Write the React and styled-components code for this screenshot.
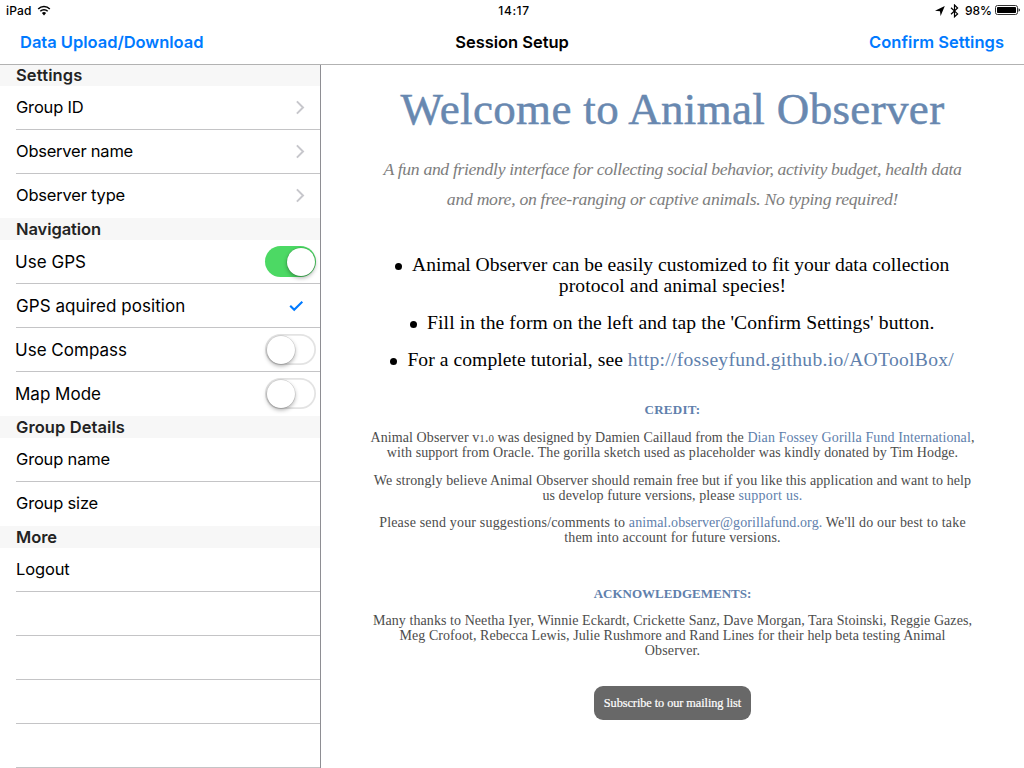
import React from "react";
import styled, { createGlobalStyle } from "styled-components";

const Global = createGlobalStyle`
  * { box-sizing: border-box; }
  body { margin: 0; background: #fff; overflow: hidden; }
`;

const Screen = styled.div`
  width: 1024px;
  height: 768px;
  display: flex;
  flex-direction: column;
  overflow: hidden;
  background: #fff;
  color: #000;
  font-family: Inter, "Liberation Sans", sans-serif;
  font-size: 16.5px;
`;

/* A run of text on one line; $ls is its tracking in px. */
const Text = styled.span`
  display: inline-block;
  white-space: nowrap;
  letter-spacing: ${(p) => p.$ls || 0}px;
`;

/* ---------- top bars ---------- */
const StatusBar = styled.header`
  height: 20px;
  display: grid;
  grid-template-columns: 1fr auto 1fr;
  padding: 0 4px 0 6px;
  font-size: 12px;
  font-weight: 550;
  line-height: 22px;
`;
const StatusGroup = styled.div`
  display: flex;
  align-items: flex-start;
  justify-content: ${(p) => (p.$end ? "flex-end" : "flex-start")};
`;
const StatusIcon = styled.svg`
  flex: none;
  margin: ${(p) => p.$m};
`;
const Clock = styled(Text)`
  padding-left: 2px;
`;

const NavBar = styled.nav`
  height: 45px;
  display: grid;
  grid-template-columns: 1fr auto 1fr;
  padding: 0 20px;
  border-bottom: 1px solid #b2b2b2;
  font-weight: 600;
  line-height: 44px;
`;
const NavLink = styled(Text)`
  color: #007aff;
  justify-self: ${(p) => (p.$end ? "end" : "start")};
`;

/* ---------- sidebar ---------- */
const Body = styled.div`
  flex: 1;
  min-height: 0;
  display: flex;
`;
const Sidebar = styled.aside`
  width: 321px;
  flex: none;
  overflow: hidden;
  border-right: 1px solid #8e8e93;
`;
const SectionHeader = styled.h2`
  margin: 0;
  height: ${(p) => (p.$first ? 21 : 22)}px;
  line-height: ${(p) => (p.$first ? 20 : 22)}px;
  padding-left: 16px;
  background: #f7f7f7;
  color: #232323;
  font-size: 16.5px;
  font-weight: 600;
`;
const RowBox = styled.div`
  height: 44px;
  padding-left: 16px;
`;
const RowInner = styled.div`
  height: 44px;
  display: flex;
  justify-content: space-between;
  align-items: flex-start;
  border-bottom: 1px solid ${(p) => (p.$last ? "transparent" : "#c4c4c6")};
  font-size: ${(p) => (p.$large ? 17 : 16.5)}px;
  line-height: ${(p) => (p.$large ? 45 : 43)}px;
`;
const RowLabel = styled(Text)`
  margin-left: ${(p) => (p.$outdent ? -1 : 0)}px;
`;
const Switch = styled.span`
  width: 51px;
  height: 31px;
  margin: 6px 4px 0 0;
  display: flex;
  align-items: center;
  justify-content: ${(p) => (p.$on ? "flex-end" : "flex-start")};
  padding: 0 1.5px;
  border-radius: 16px;
  background: ${(p) => (p.$on ? "#4cd964" : "#fff")};
  box-shadow: ${(p) => (p.$on ? "none" : "inset 0 0 0 1.75px #e3e3e3")};
`;
const Knob = styled.span`
  width: 28px;
  height: 28px;
  border-radius: 50%;
  background: #fff;
  box-shadow: 0 0 0 0.5px rgba(0, 0, 0, 0.16), 0 2px 4px rgba(0, 0, 0, 0.32);
`;
const RowIcon = styled.svg`
  flex: none;
  margin: ${(p) => p.$m};
`;

const Chevron = () => (
  <RowIcon $m="14px 15px 0 0" width="9" height="15" viewBox="0 0 9 15">
    <path d="M.9 1.4 7 7.5.9 13.6" fill="none" stroke="#c7c7cc" strokeWidth="2" />
  </RowIcon>
);
const Check = () => (
  <RowIcon $m="16px 16px 0 0" width="15" height="12" viewBox="0 0 15 12">
    <path d="M1.2 5.8 5.2 9.8 13.3 1.8" fill="none" stroke="#007aff" strokeWidth="2.1" />
  </RowIcon>
);
const Toggle = ({ on }) => (
  <Switch $on={on}>
    <Knob />
  </Switch>
);

const Row = ({ label, ls, large, outdent, last, children }) => (
  <RowBox>
    <RowInner $large={large} $last={last}>
      <RowLabel $ls={ls} $outdent={outdent}>{label}</RowLabel>
      {children}
    </RowInner>
  </RowBox>
);

/* ---------- main pane ---------- */
const Main = styled.main`
  flex: 1;
  padding-top: 19px;
  text-align: center;
  font-family: "Liberation Serif", "Times New Roman", serif;
`;
const Title = styled.h1`
  margin: 0;
  font-size: 45px;
  font-weight: 400;
  line-height: 50px;
  color: #6888b0;
  -webkit-text-stroke: 0.5px #6888b0;
`;
const Subtitle = styled.div`
  margin-top: 20px;
  font-size: 17.7px;
  font-style: italic;
  line-height: 30px;
  color: #7d7d7d;
`;
const Bullets = styled.ul`
  list-style: none;
  margin: 40px 0 0;
  padding: 0;
  display: flex;
  flex-direction: column;
  gap: 16px;
  font-size: 19.6px;
  line-height: 21px;
`;
const Dot = styled.span`
  display: inline-block;
  width: 7.5px;
  height: 7.5px;
  margin: 0 10px 0 -1px;
  border-radius: 50%;
  background: #000;
  vertical-align: 1px;
`;
const Line = styled.div`
  height: ${(p) => p.$h}px;
`;
const Link = styled.a`
  color: #6080ac;
  letter-spacing: ${(p) => (p.$ls ? `${p.$ls}px` : "inherit")};
`;
const Heading = styled.h3`
  margin: ${(p) => p.$top}px 0 0;
  font-size: 13px;
  font-weight: 700;
  line-height: 15px;
  height: 15px;
  color: #6080ac;
`;
const Paragraph = styled.div`
  margin-top: ${(p) => p.$top || 13}px;
  font-size: 14px;
  line-height: 15px;
  color: #4c4c4c;
`;
const OldStyle = styled.span`
  font-size: 0.78em;
`;
const Subscribe = styled.button`
  margin: 28px 0 0;
  width: 157px;
  height: 34px;
  padding: 0;
  border: 0;
  border-radius: 9px;
  background: #686868;
  color: #fff;
  font-family: inherit;
  font-size: 12.3px;
  line-height: 34px;
  vertical-align: top;
  -webkit-text-stroke: 0.2px #fff;
`;

const T = ({ ls, children }) => (
  <Line $h={15}>
    <Text $ls={ls}>{children}</Text>
  </Line>
);

export default function App() {
  return (
    <Screen>
      <Global />
      <StatusBar>
        <StatusGroup>
          <Text $ls={0.15}>iPad</Text>
          <StatusIcon $m="5px 0 0 5px" width="14" height="11" viewBox="0 0 14 11">
            <path d="M1.2 4A8.2 8.2 0 0 1 12.8 4M3.3 6.2A5.2 5.2 0 0 1 10.7 6.2" fill="none" stroke="#000" strokeWidth="1.5" />
            <path d="M7 10.4 4.9 8.1A3 3 0 0 1 9.1 8.1Z" />
          </StatusIcon>
        </StatusGroup>
        <Clock $ls={0.6}>14:17</Clock>
        <StatusGroup $end>
          <StatusIcon $m="6px 5px 0 0" width="10" height="10" viewBox="0 0 10 10">
            <path d="M9.8.1 5.6 10 5 5.3 0 4.8Z" />
          </StatusIcon>
          <StatusIcon $m="4px 6px 0 0" width="9" height="14" viewBox="0 0 9 14">
            <path d="M1 3.7 7.6 9.9 4.5 12.8V1L7.6 4 1 10.2" fill="none" stroke="#000" strokeWidth="1.2" />
          </StatusIcon>
          <Text $ls={-0.05}>98%</Text>
          <StatusIcon $m="5px 0 0 3px" width="25" height="10" viewBox="0 0 25 10">
            <rect x=".5" y=".5" width="22" height="9" rx="2" fill="none" stroke="#333" />
            <rect x="2" y="2" width="19" height="6" rx=".8" />
            <path d="M23.6 3.2Q24.9 3.8 24.9 5T23.6 6.8Z" />
          </StatusIcon>
        </StatusGroup>
      </StatusBar>

      <NavBar>
        <NavLink $ls={-0.02}>Data Upload/Download</NavLink>
        <Text $ls={-0.03}>Session Setup</Text>
        <NavLink $ls={0.04} $end>Confirm Settings</NavLink>
      </NavBar>

      <Body>
        <Sidebar>
          <SectionHeader $first><Text $ls={0.135}>Settings</Text></SectionHeader>
          <Row label="Group ID" ls={-0.186}><Chevron /></Row>
          <Row label="Observer name" ls={-0.233}><Chevron /></Row>
          <Row label="Observer type" ls={-0.206} last><Chevron /></Row>
          <SectionHeader><Text $ls={-0.081}>Navigation</Text></SectionHeader>
          <Row label="Use GPS" ls={0.033} large outdent><Toggle on /></Row>
          <Row label="GPS aquired position" ls={0.06} large><Check /></Row>
          <Row label="Use Compass" ls={0.01} large outdent><Toggle /></Row>
          <Row label="Map Mode" ls={0.004} large outdent last><Toggle /></Row>
          <SectionHeader><Text $ls={0.084}>Group Details</Text></SectionHeader>
          <Row label="Group name" ls={-0.173} />
          <Row label="Group size" ls={-0.184} last />
          <SectionHeader><Text $ls={-0.055}>More</Text></SectionHeader>
          <Row label="Logout" ls={-0.148} />
          <Row />
          <Row />
          <Row />
          <Row />
        </Sidebar>

        <Main>
          <Title><Text $ls={0.347}>Welcome to Animal Observer</Text></Title>
          <Subtitle>
            <Line $h={30}>
              <Text $ls={-0.347}>A fun and friendly interface for collecting social behavior, activity budget, health data</Text>
            </Line>
            <Line $h={30}>
              <Text $ls={-0.295}>and more, on free-ranging or captive animals. No typing required!</Text>
            </Line>
          </Subtitle>
          <Bullets>
            <li>
              <Line $h={21}>
                <Dot />
                <Text $ls={-0.02}>Animal Observer can be easily customized to fit your data collection</Text>
              </Line>
              <Line $h={21}><Text $ls={0.099}>protocol and animal species!</Text></Line>
            </li>
            <li>
              <Line $h={21}>
                <Dot />
                <Text $ls={0.1}>Fill in the form on the left and tap the 'Confirm Settings' button.</Text>
              </Line>
            </li>
            <li>
              <Line $h={21}>
                <Dot />
                <Text $ls={0.06}>For a complete tutorial, see <Link $ls={0.285}>http://fosseyfund.github.io/AOToolBox/</Link></Text>
              </Line>
            </li>
          </Bullets>

          <Heading $top={32}><Text $ls={0.297}>CREDIT:</Text></Heading>
          <Paragraph>
            <T ls={0.09}>
              Animal Observer v<OldStyle>1</OldStyle>.<OldStyle>0</OldStyle> was designed by Damien Caillaud from the <Link>Dian Fossey Gorilla Fund International</Link>,
            </T>
            <T ls={0.085}>with support from Oracle. The gorilla sketch used as placeholder was kindly donated by Tim Hodge.</T>
          </Paragraph>
          <Paragraph>
            <T ls={0.09}>We strongly believe Animal Observer should remain free but if you like this application and want to help</T>
            <T ls={0.09}>us develop future versions, please <Link $ls={0.25}>support us.</Link></T>
          </Paragraph>
          <Paragraph $top={12}>
            <T ls={0.18}>
              Please send your suggestions/comments to <Link $ls={0.1}>animal.observer@gorillafund.org.</Link> We'll do our best to take
            </T>
            <T ls={0.15}>them into account for future versions.</T>
          </Paragraph>

          <Heading $top={41}><Text $ls={0.01}>ACKNOWLEDGEMENTS:</Text></Heading>
          <Paragraph $top={12}>
            <T ls={0.07}>Many thanks to Neetha Iyer, Winnie Eckardt, Crickette Sanz, Dave Morgan, Tara Stoinski, Reggie Gazes,</T>
            <T ls={0.07}>Meg Crofoot, Rebecca Lewis, Julie Rushmore and Rand Lines for their help beta testing Animal</T>
            <T ls={0.15}>Observer.</T>
          </Paragraph>
          <Subscribe><Text $ls={-0.07}>Subscribe to our mailing list</Text></Subscribe>
        </Main>
      </Body>
    </Screen>
  );
}
